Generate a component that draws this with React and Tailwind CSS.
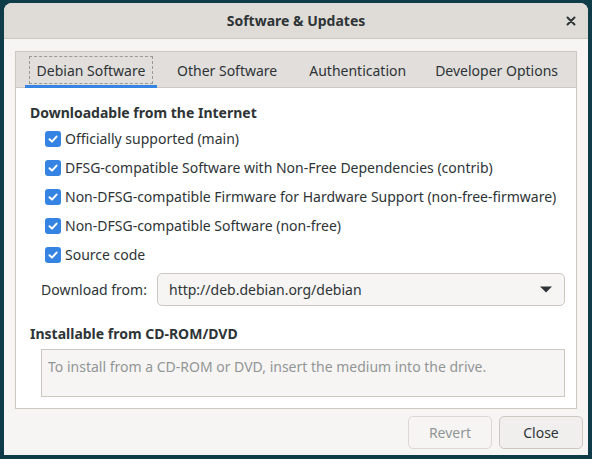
import React from "react";

const font = { fontFamily: '"Noto Sans", "Open Sans", sans-serif' };

function Check() {
  return (
    <span className="flex h-[16px] w-[16px] shrink-0 items-center justify-center rounded-[3px] bg-[#3584e4]">
      <svg width="12" height="12" viewBox="0 0 12 12">
        <path d="M2.5 6.2 L5 8.6 L9.6 3.6" fill="none" stroke="white" strokeWidth="2" strokeLinecap="round" strokeLinejoin="round" />
      </svg>
    </span>
  );
}

function Row({ label }) {
  return (
    <div className="flex h-[29px] items-center gap-[4px] whitespace-nowrap pl-[15px]">
      <Check />
      <span>{label}</span>
    </div>
  );
}

export default function App() {
  return (
    <div className="h-[459px] w-[592px] overflow-hidden bg-[#0e3c48] pt-[3px] pl-[4px] text-[14px] text-[#2e3436]" style={font}>
      <div className="flex h-[452px] w-[584px] flex-col overflow-hidden rounded-t-[8px] bg-[#f6f5f4]">
        <div className="relative flex h-[36px] shrink-0 items-center justify-center border-b border-[#cdc7c2] bg-[#dfdcd8]">
          <span className="text-[14px] font-bold text-[#2e3436]">Software &amp; Updates</span>
          <svg className="absolute right-[12px] top-[13px]" width="10" height="10" viewBox="0 0 10 10">
            <path d="M1.5 1.5 L8.5 8.5 M8.5 1.5 L1.5 8.5" stroke="#2e3436" strokeWidth="2" strokeLinecap="round" />
          </svg>
        </div>
        <div className="mx-[11px] mt-[12px] flex h-[358px] flex-col border border-[#cdc7c2]">
          <div className="flex h-[36px] shrink-0 items-stretch whitespace-nowrap border-b border-[#cdc7c2] bg-[#e1dedb] pl-[9px] pt-[1px]">
            <div className="relative flex w-[132px] shrink-0 items-center justify-center">
              <div className="flex h-[28px] w-[124px] items-center justify-center border border-dashed border-[#9a9996]">
                Debian Software
              </div>
              <div className="absolute bottom-[-1px] left-0 right-0 h-[3px] bg-[#3584e4]"></div>
            </div>
            <div className="flex items-center pl-[20px]">Other Software</div>
            <div className="flex items-center pl-[32px]">Authentication</div>
            <div className="flex items-center pl-[29px]">Developer Options</div>
          </div>
          <div className="flex flex-1 flex-col bg-white pl-[14px] pr-[11px]">
            <div className="mt-[14px] font-bold">Downloadable from the Internet</div>
            <div className="mt-[1px] flex flex-col">
              <Row label="Officially supported (main)" />
              <Row label="DFSG-compatible Software with Non-Free Dependencies (contrib)" />
              <Row label="Non-DFSG-compatible Firmware for Hardware Support (non-free-firmware)" />
              <Row label="Non-DFSG-compatible Software (non-free)" />
              <Row label="Source code" />
            </div>
            <div className="mt-[4px] flex items-center pl-[11px]">
              <span className="w-[116px]">Download from:</span>
              <div className="flex h-[33px] flex-1 items-center justify-between rounded-[5px] border border-[#cdc7c2] bg-[#f6f5f4] pl-[11px] pr-[12px]">
                <span>http://deb.debian.org/debian</span>
                <svg width="12" height="8" viewBox="0 0 12 8">
                  <path d="M0 0.5 L12 0.5 L6 6.5 Z" fill="#2e3436" />
                </svg>
              </div>
            </div>
            <div className="mt-[17px] font-bold">Installable from CD-ROM/DVD</div>
            <div className="ml-[11px] mt-[5px] h-[48px] border border-[#cdc7c2] bg-[#f6f5f4] pl-[6px] pt-[6px] text-[#929595]">
              To install from a CD-ROM or DVD, insert the medium into the drive.
            </div>
          </div>
        </div>
        <div className="mr-[5px] mt-[7px] flex justify-end gap-[7px]">
          <div className="flex h-[33px] w-[84px] items-center justify-center rounded-[5px] border border-[#dcd8d4] bg-[#f6f5f4] text-[#929595]">Revert</div>
          <div className="flex h-[33px] w-[84px] items-center justify-center rounded-[5px] border border-[#cdc7c2] bg-[#f0efee]">Close</div>
        </div>
      </div>
    </div>
  );
}
